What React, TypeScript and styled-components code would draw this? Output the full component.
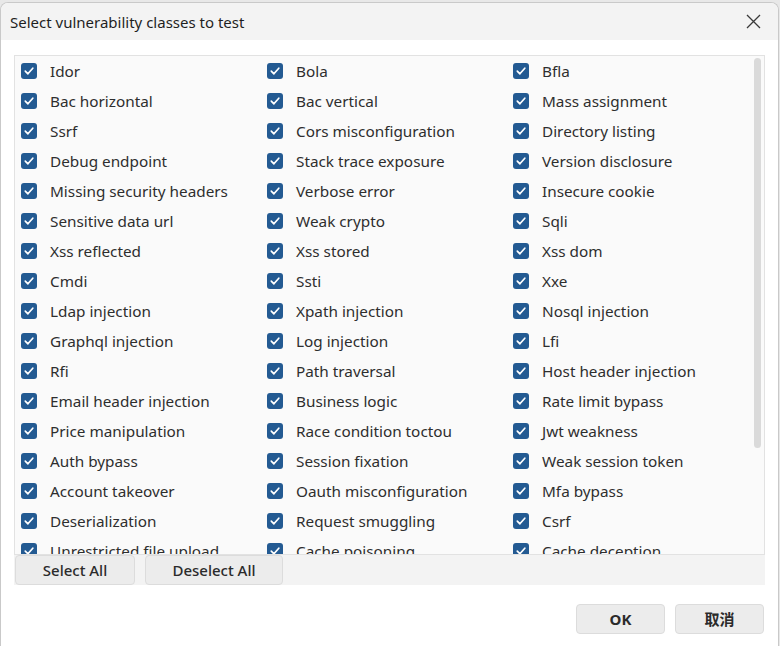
import styled, { createGlobalStyle } from "styled-components";

const GlobalStyle = createGlobalStyle`
  html, body {
    margin: 0;
    padding: 0;
    background: #e8e8e8;
  }
  body {
    font-family: "Noto Sans", "Noto Sans CJK SC", sans-serif;
    color: #2b2b2b;
  }
`;

const Window = styled.div`
  margin-top: 2px;
  width: 779px;
  height: 644px;
  background: #ffffff;
  border: 1px solid #c9c9c9;
  border-bottom: none;
  border-radius: 8px 8px 0 0;
  box-sizing: border-box;
  display: flex;
  flex-direction: column;
  overflow: hidden;
`;

const TitleBar = styled.div`
  height: 37px;
  background: #f3f3f3;
  display: flex;
  align-items: center;
  justify-content: space-between;
  padding: 0 10px 0 9px;
  flex-shrink: 0;
`;

const Title = styled.div`
  font-size: 15px;
  color: #1f1f1f;
`;

const CloseButton = styled.button`
  border: none;
  background: transparent;
  padding: 0;
  margin-right: 6px;
  width: 18px;
  height: 18px;
  display: flex;
  align-items: center;
  justify-content: center;
`;

const Body = styled.div`
  flex: 1;
  display: flex;
  flex-direction: column;
  padding: 15px 13px 0 13px;
`;

const Panel = styled.div`
  background: #f3f3f3;
  width: 751px;
  display: flex;
  flex-direction: column;
`;

const ListBox = styled.div`
  height: 500px;
  border: 1px solid #e2e2e2;
  background: #fafafa;
  box-sizing: border-box;
  position: relative;
  overflow: hidden;
`;

const Grid = styled.div`
  display: grid;
  grid-template-columns: 246px 246px 246px;
  padding: 0 0 0 6px;
`;

const Row = styled.label`
  height: 30px;
  display: flex;
  align-items: center;
  gap: 13px;
  font-size: 15.3px;
  color: #2e2e2e;
  white-space: nowrap;
`;

const Box = styled.span`
  width: 16px;
  height: 16px;
  border-radius: 3px;
  background: #235a92;
  display: flex;
  align-items: center;
  justify-content: center;
  flex-shrink: 0;
`;

const Thumb = styled.div`
  position: absolute;
  right: 3px;
  top: 2px;
  width: 7px;
  height: 390px;
  border-radius: 4px;
  background: #dadada;
`;

const ButtonRow = styled.div`
  display: flex;
  gap: 10px;
  height: 30px;
  padding-left: 1px;
`;

const Button = styled.button<{ $w: number }>`
  width: ${(p) => p.$w}px;
  height: 30px;
  border: 1px solid #dcdcdc;
  border-radius: 4px;
  background: #ececec;
  font-family: "Noto Sans", "Noto Sans CJK SC", sans-serif;
  font-size: 15px;
  line-height: 20px;
  font-weight: 500;
  color: #2b2b2b;
  padding: 0;
`;

const Footer = styled.div`
  display: flex;
  justify-content: flex-end;
  gap: 10px;
  padding: 19px 1px 0 0;
`;

const FooterButton = styled(Button)`
  font-weight: 700;
`;

const items: string[] = [
  "Idor", "Bola", "Bfla",
  "Bac horizontal", "Bac vertical", "Mass assignment",
  "Ssrf", "Cors misconfiguration", "Directory listing",
  "Debug endpoint", "Stack trace exposure", "Version disclosure",
  "Missing security headers", "Verbose error", "Insecure cookie",
  "Sensitive data url", "Weak crypto", "Sqli",
  "Xss reflected", "Xss stored", "Xss dom",
  "Cmdi", "Ssti", "Xxe",
  "Ldap injection", "Xpath injection", "Nosql injection",
  "Graphql injection", "Log injection", "Lfi",
  "Rfi", "Path traversal", "Host header injection",
  "Email header injection", "Business logic", "Rate limit bypass",
  "Price manipulation", "Race condition toctou", "Jwt weakness",
  "Auth bypass", "Session fixation", "Weak session token",
  "Account takeover", "Oauth misconfiguration", "Mfa bypass",
  "Deserialization", "Request smuggling", "Csrf",
  "Unrestricted file upload", "Cache poisoning", "Cache deception",
  "Open redirect", "Clickjacking", "Prototype pollution",
  "Subdomain takeover", "Crlf injection", "Http parameter pollution",
];

const Check = () => (
  <svg width="12" height="12" viewBox="0 0 12 12">
    <path d="M2.3 6.2 L4.9 8.8 L9.8 3.2" fill="none" stroke="#ffffff" strokeWidth="1.7" strokeLinecap="round" strokeLinejoin="round" />
  </svg>
);

export default function App() {
  return (
    <>
      <GlobalStyle />
      <Window>
        <TitleBar>
          <Title>Select vulnerability classes to test</Title>
          <CloseButton>
            <svg width="15" height="15" viewBox="0 0 15 15">
              <path d="M1 1 L14 14 M14 1 L1 14" stroke="#3a3a3a" strokeWidth="1.3" />
            </svg>
          </CloseButton>
        </TitleBar>
        <Body>
          <Panel>
            <ListBox>
              <Grid>
                {items.map((name) => (
                  <Row key={name}>
                    <Box>
                      <Check />
                    </Box>
                    {name}
                  </Row>
                ))}
              </Grid>
              <Thumb />
            </ListBox>
            <ButtonRow>
              <Button $w={120}>Select All</Button>
              <Button $w={138}>Deselect All</Button>
            </ButtonRow>
          </Panel>
          <Footer>
            <FooterButton $w={89}>OK</FooterButton>
            <FooterButton $w={89}>取消</FooterButton>
          </Footer>
        </Body>
      </Window>
    </>
  );
}
